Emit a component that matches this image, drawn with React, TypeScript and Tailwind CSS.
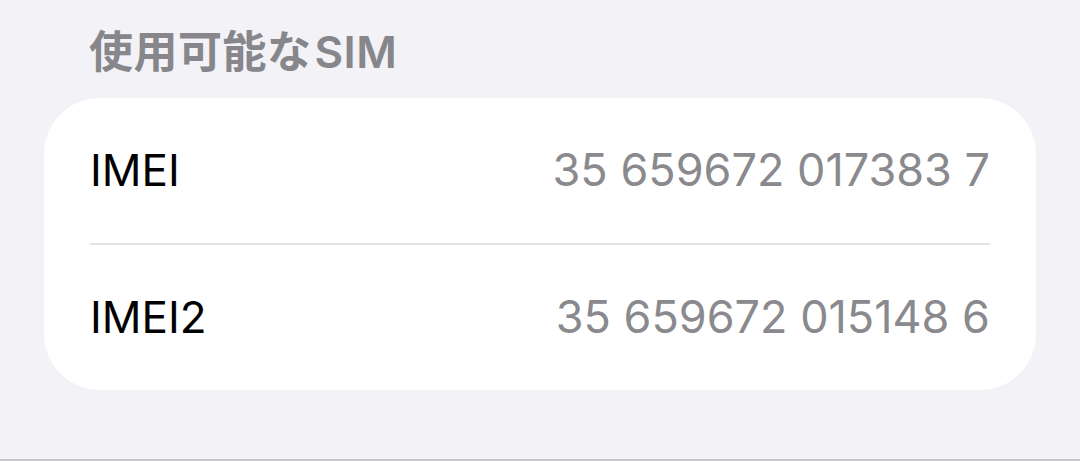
export default function App() {
  const rows = [
    { label: 'IMEI', value: '35 659672 017383 7' },
    { label: 'IMEI2', value: '35 659672 015148 6' },
  ];

  return (
    <div className="h-[461px] w-[1080px] bg-[#f2f2f7] flex flex-col font-['Inter','Noto_Sans_CJK_JP',sans-serif]">
      {/* Section header */}
      <div className="h-[98px] flex items-center pl-[89px] pt-[6px]">
        <span className="text-[44px] leading-none font-semibold text-[#86868b] tracking-[0.5px]">
          使用可能な<span className="ml-[3px]">SIM</span>
        </span>
      </div>

      {/* Grouped list */}
      <div className="mx-[44px] rounded-[56px] bg-white">
        {rows.map((row, i) => (
          <div key={row.label}>
            {i > 0 && <div className="mx-[46px] h-[2px] bg-[#e3e3e7]" />}
            <div className="h-[145px] flex items-center justify-between px-[46px] pb-[2px]">
              <span className="text-[44px] leading-none text-black">{row.label}</span>
              <span className="text-[45px] leading-none text-[#8a8a8e]">{row.value}</span>
            </div>
          </div>
        ))}
      </div>

      <div className="flex-1" />
      <div className="h-[2px] bg-[#c6c6cb]" />
    </div>
  );
}
